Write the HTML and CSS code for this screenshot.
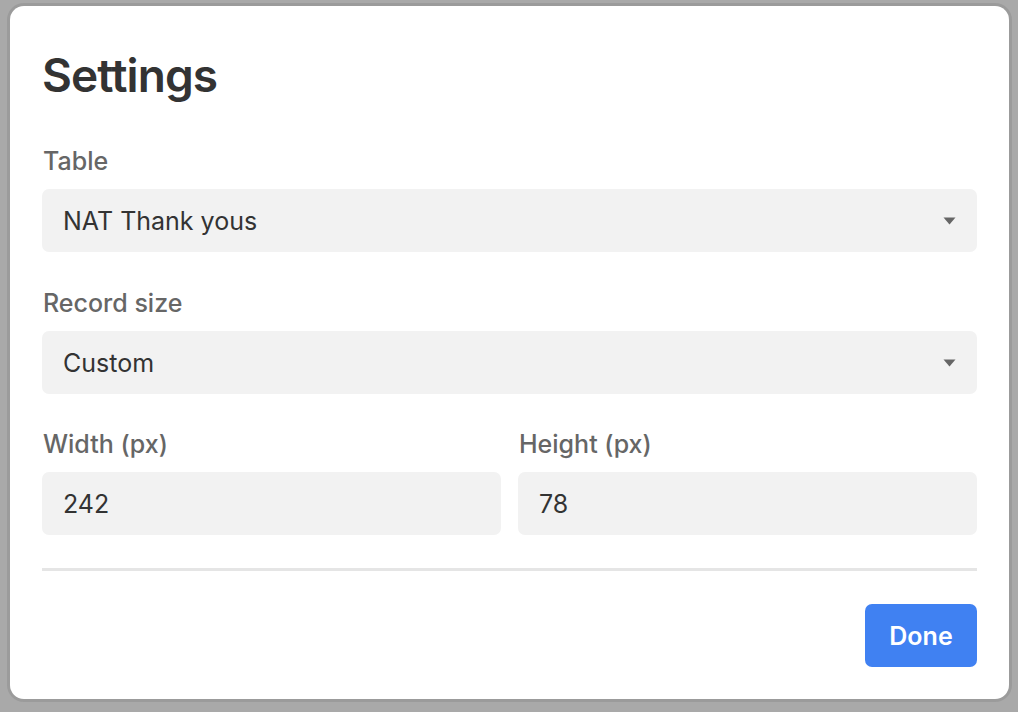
FILE: index.html
```html
<!DOCTYPE html>
<html>
<head>
<meta charset="utf-8">
<link rel="stylesheet" href="styles.css">
</head>
<body>
<div class="dialog">
  <h1 class="title">Settings</h1>
  <div class="field">
    <div class="label">Table</div>
    <div class="select">
      <span class="value">NAT Thank yous</span>
      <svg class="caret" width="13" height="8" viewBox="0 0 13 8"><path d="M0.5 0.5 L12.5 0.5 L6.5 7.5 Z" fill="#666"/></svg>
    </div>
  </div>
  <div class="field">
    <div class="label">Record size</div>
    <div class="select">
      <span class="value">Custom</span>
      <svg class="caret" width="13" height="8" viewBox="0 0 13 8"><path d="M0.5 0.5 L12.5 0.5 L6.5 7.5 Z" fill="#666"/></svg>
    </div>
  </div>
  <div class="row">
    <div class="field col">
      <div class="label">Width (px)</div>
      <div class="input"><span class="value">242</span></div>
    </div>
    <div class="field col">
      <div class="label">Height (px)</div>
      <div class="input"><span class="value">78</span></div>
    </div>
  </div>
  <div class="divider"></div>
  <div class="footer">
    <button class="done">Done</button>
  </div>
</div>
</body>
</html>
```

FILE: styles.css
```css
html, body {
  margin: 0;
  padding: 0;
  background: #a9a9a9;
  height: 712px;
  overflow: hidden;
}
body {
  padding: 6px 9px 0 10px;
  box-sizing: border-box;
  font-family: Inter, "Noto Sans", "Liberation Sans", sans-serif;
}
.dialog {
  background: #fff;
  border-radius: 14px;
  box-shadow: 0 0 0 3px #9b9b9b;
  padding: 32px;
  height: 693px;
  box-sizing: border-box;
}
.title {
  margin: 8px 0 0 0;
  font-size: 46px;
  line-height: 58px;
  font-weight: 600;
  color: #333;
  letter-spacing: -0.9px;
}
.field {
  display: flex;
  flex-direction: column;
}
.title + .field {
  margin-top: 42px;
}
.field + .field {
  margin-top: 36px;
}
.label {
  font-size: 25px;
  line-height: 30px;
  color: #666;
  font-weight: 500;
  margin-bottom: 13px;
  padding-left: 1px;
}
.select, .input {
  height: 63px;
  background: #f2f2f2;
  border-radius: 7px;
  display: flex;
  align-items: center;
  padding: 0 21px;
  box-sizing: border-box;
}
.select {
  justify-content: space-between;
}
.value {
  font-size: 25px;
  color: #333;
  font-weight: 400;
  padding-top: 1px;
}
.row {
  display: grid;
  grid-template-columns: 1fr 1fr;
  column-gap: 17px;
  margin-top: 35px;
}
.row .field + .field {
  margin-top: 0;
}
.divider {
  height: 3px;
  background: #e5e5e5;
  margin-top: 33px;
}
.footer {
  display: flex;
  justify-content: flex-end;
  margin-top: 33px;
}
.done {
  width: 112px;
  height: 63px;
  border: none;
  border-radius: 7px;
  background: #4081f2;
  color: #fff;
  font-family: Inter, "Noto Sans", "Liberation Sans", sans-serif;
  font-size: 25px;
  font-weight: 600;
  padding: 0;
}
```
